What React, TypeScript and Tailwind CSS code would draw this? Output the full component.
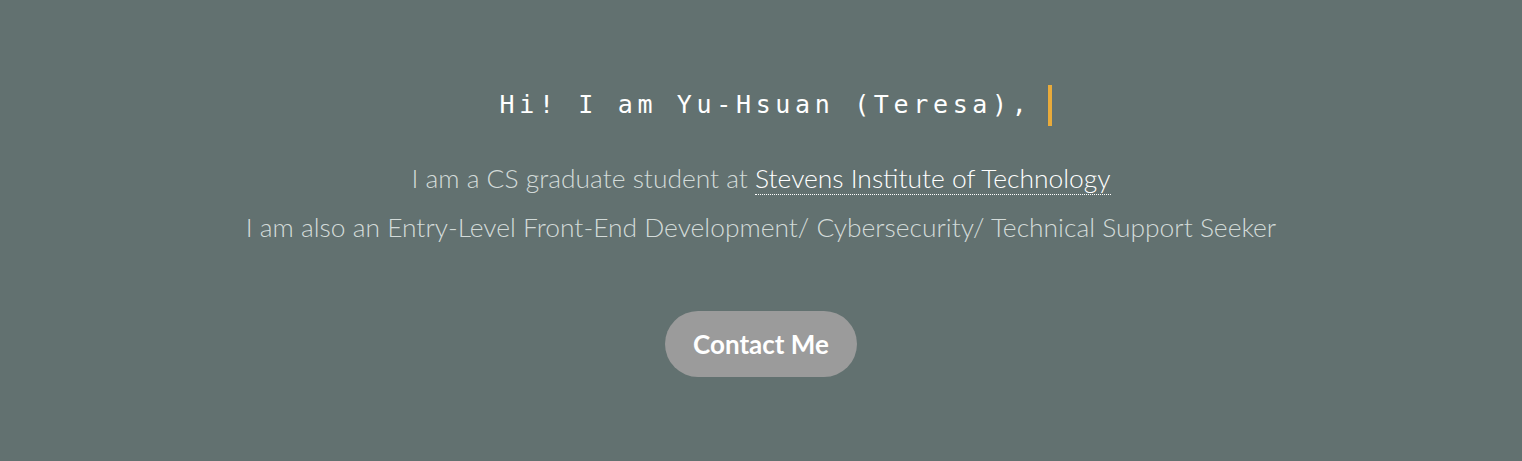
import React from 'react';

export default function App() {
  return (
    <main className="w-full h-[461px] bg-[#627170] flex flex-col items-center font-['Lato',sans-serif]">
      {/* typed heading */}
      <div className="mt-[84px] flex items-center h-[42px] ml-[30px]">
        <h1 className="font-['DejaVu_Sans_Mono',monospace] text-[25px] tracking-[4.65px] text-white">
          Hi! I am Yu-Hsuan (Teresa),
        </h1>
        <span className="ml-[17px] w-[4px] h-[41px] bg-[#e9ab3b]" />
      </div>

      <div className="mt-[28px] text-center text-[26.4px] leading-[49px] font-light text-[#d3dbd9]">
        <p>
          I am a CS graduate student at{' '}
          <a className="text-white border-b border-dotted border-white">Stevens Institute of Technology</a>
        </p>
        <p>I am also an Entry-Level Front-End Development/ Cybersecurity/ Technical Support Seeker</p>
      </div>

      <button className="mt-[59px] w-[192px] h-[66px] rounded-full bg-[#9b9b9b] text-white text-[26px] font-bold">
        Contact Me
      </button>
    </main>
  );
}
